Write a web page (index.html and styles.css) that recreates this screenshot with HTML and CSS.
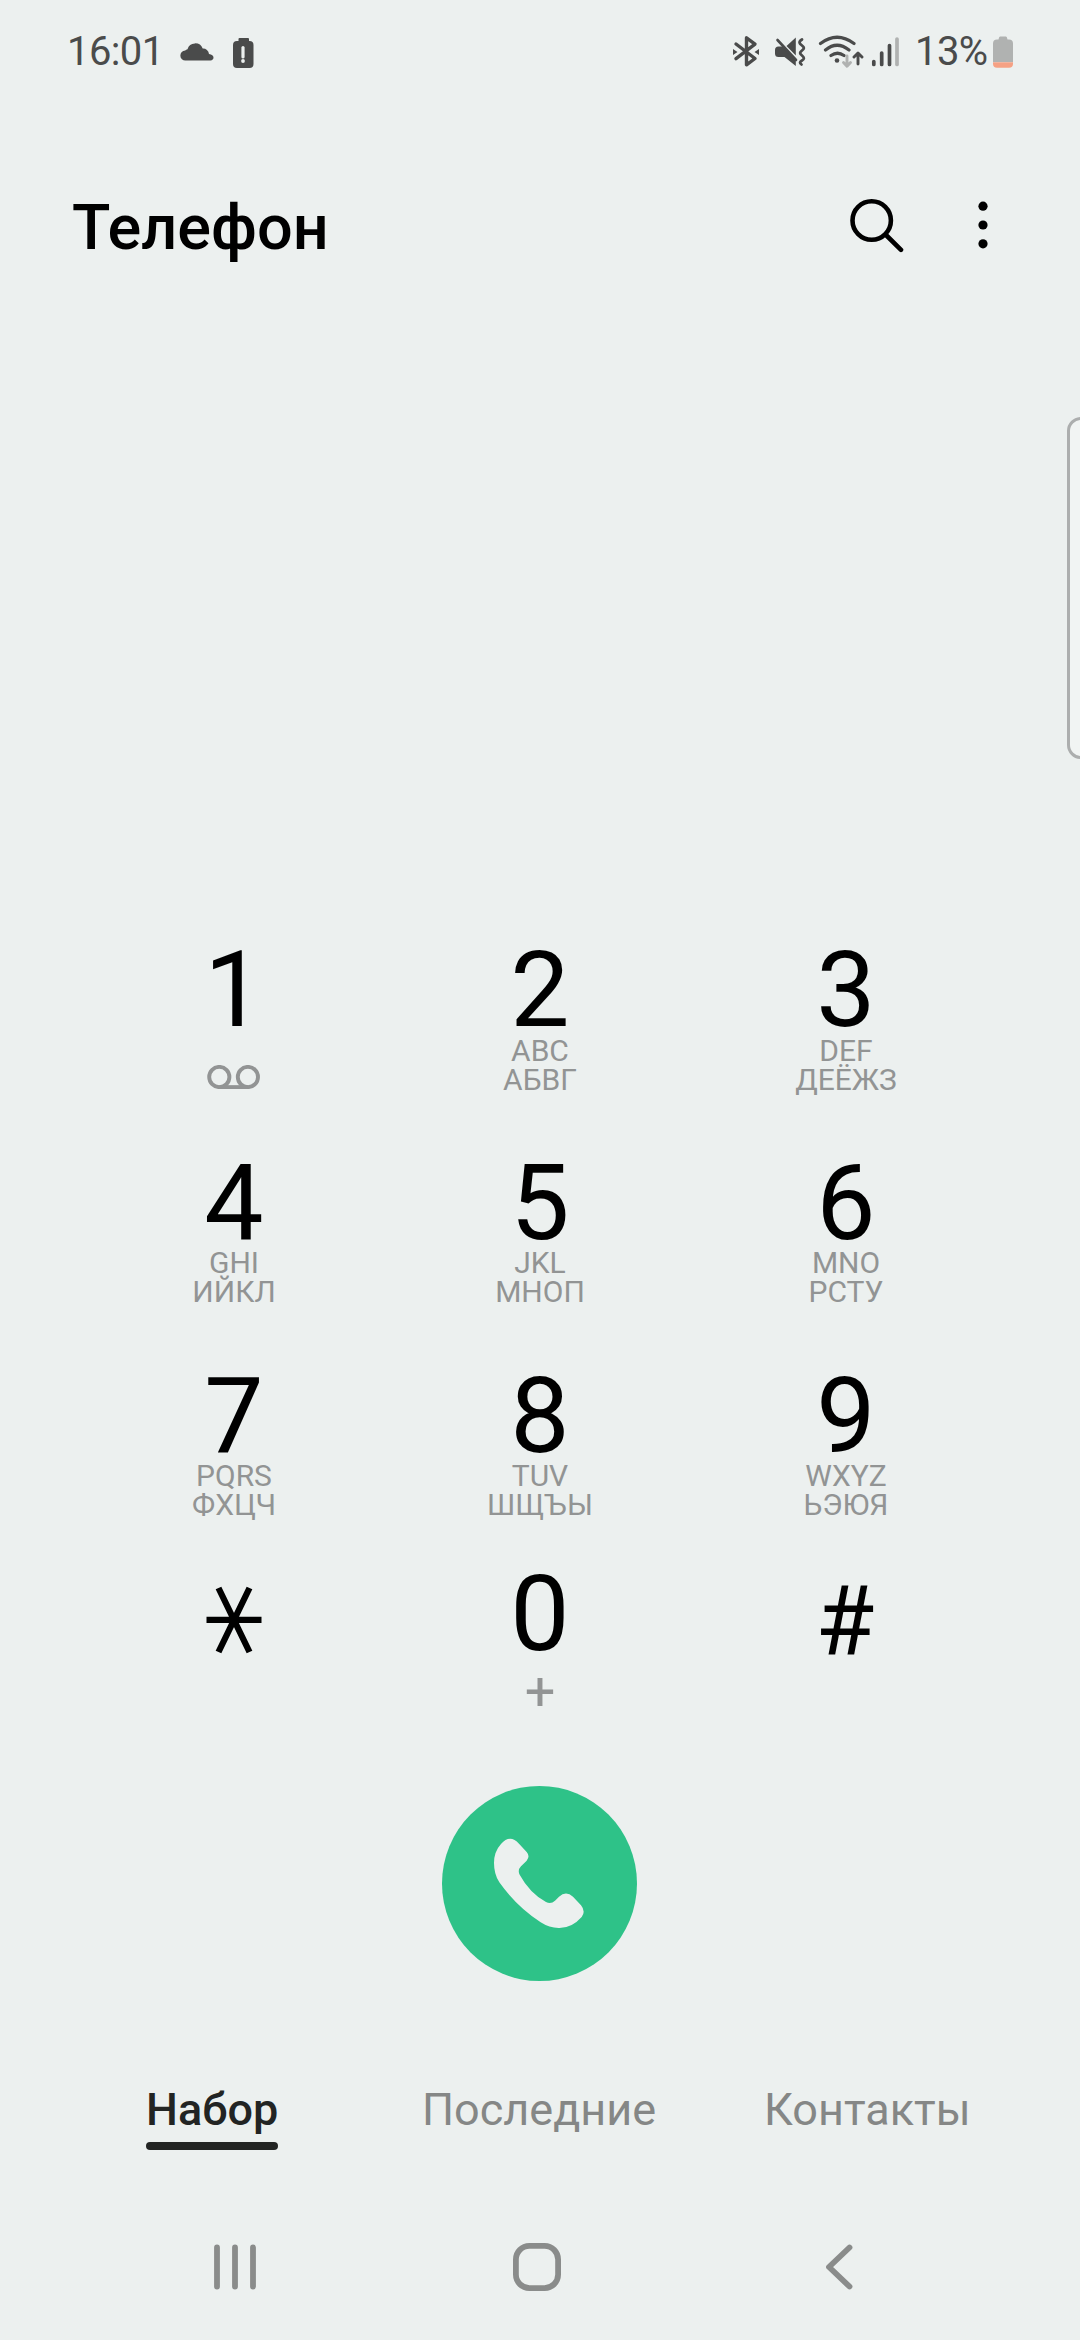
FILE: index.html
```html
<!DOCTYPE html>
<html lang="ru">
<head>
<meta charset="utf-8">
<title>Телефон</title>
<link rel="stylesheet" href="styles.css">
</head>
<body>
<div class="phone">
  <div class="status">
    <span class="clock">16:01</span>
    <svg class="cloud" width="34" height="20" viewBox="180 41 34 20"><path d="M185.500 60.500a5 5 0 0 1-.3-10 3.500 3.500 0 0 1 2.300-1.300 8 8 0 0 1 15.200-.6 6 6 0 0 1 6.300 5.400c2.800.4 4.500 1.700 4.500 3.600 0 1.600-1.200 2.900-3 2.900z"/></svg>
    <svg class="alert" width="22" height="32" viewBox="232 37 22 32"><path d="M239.500 38h8.500a1 1 0 0 1 1 1v2h.5a4 4 0 0 1 4 4v19a4 4 0 0 1-4 4h-12.500a4 4 0 0 1-4-4v-19a4 4 0 0 1 4-4h1.500v-2a1 1 0 0 1 1-1z"/><path class="cut-line" d="M243 47.500v9.500"/><circle class="cut-dot" cx="243" cy="61" r="1.900"/></svg>
    <svg class="bluetooth" width="28" height="34" viewBox="732 34 28 34"><path class="line" d="M736 44l19 14.500-8.500 6.300v-27l8.500 6.300-19 14.500"/><path class="tip" d="M733 49l4.500 3-4.500 3zM759 49l-4.500 3 4.500 3z"/></svg>
    <svg class="mute" width="32" height="32" viewBox="774 36 32 32"><path d="M775 50q0-3.500 3.500-3.500h4l13.300 13v6.500l-11.300-9h-6q-3.500 0-3.500-3.500zM786.500 46l9.300-8.500v18z"/><path class="line thin" d="M777.500 40l18.500 20"/><path class="line wave" d="M802 39.500c-4 2.500-2.500 4 0 6s2.500 3 0 5-2.500 3 0 5 2.500 3.500 0 5-2.500 2.500-.5 4"/></svg>
    <svg class="wifi" width="46" height="36" viewBox="818 33 46 36"><path class="line arc" d="M820.500 43.500q16.500-12.500 33.500 0M825.500 50q11.500-9.500 23.500 0M831 55.500q6.500-4.500 13 0"/><circle cx="837" cy="60.500" r="2.300"/><path class="line arrow pale" d="M847 56v10M843.500 62.500l3.500 3.700 3.500-3.700"/><path class="line arrow" d="M858 64v-10.500M854 57l4-4 4 4"/></svg>
    <svg class="signal" width="28" height="32" viewBox="871 36 28 32"><path class="line bar" d="M873.800 61.500v3M881.700 53v11.500M889.500 45.500v19"/><path class="line bar pale" d="M897 39v25.500"/></svg>
    <span class="percent">13%</span>
    <svg class="battery" width="20" height="32" viewBox="993 36 20 32"><path class="pale-fill" d="M1000 36.500h6q1 0 1.500 3h1.500q4 0 4 4v18.500h-20v-18.500q0-4 4-4h1.500q.5-3 1.500-3z"/><path class="low" d="M993 62.200h20v1.800q0 3.700-4 3.700h-12q-4 0-4-3.700z"/></svg>
  </div>

  <div class="header">
    <h1 class="title">Телефон</h1>
    <svg class="search" width="56" height="56" viewBox="848 197 56 56"><circle cx="871.700" cy="220.500" r="19.200"/><path d="M886 235l15 14.800"/></svg>
    <svg class="more" width="10" height="50" viewBox="977.700 200 10 50"><circle cx="982.700" cy="206.200" r="4.600"/><circle cx="982.700" cy="225" r="4.600"/><circle cx="982.700" cy="243.800" r="4.600"/></svg>
  </div>

  <div class="edge-handle"></div>

  <div class="keypad">
    <div class="key"><span class="digit">1</span><svg class="voicemail" width="54" height="24" viewBox="0 0 54 24"><circle cx="12.300" cy="12" r="10.100"/><circle cx="40.900" cy="12" r="10.100"/><path d="M12.300 22.100h28.600"/></svg></div>
    <div class="key"><span class="digit">2</span><span class="letters">ABC</span><span class="letters">АБВГ</span></div>
    <div class="key"><span class="digit">3</span><span class="letters">DEF</span><span class="letters">ДЕЁЖЗ</span></div>
    <div class="key"><span class="digit">4</span><span class="letters">GHI</span><span class="letters">ИЙКЛ</span></div>
    <div class="key"><span class="digit">5</span><span class="letters">JKL</span><span class="letters">МНОП</span></div>
    <div class="key"><span class="digit">6</span><span class="letters">MNO</span><span class="letters">РСТУ</span></div>
    <div class="key"><span class="digit">7</span><span class="letters">PQRS</span><span class="letters">ФХЦЧ</span></div>
    <div class="key"><span class="digit">8</span><span class="letters">TUV</span><span class="letters">ШЩЪЫ</span></div>
    <div class="key"><span class="digit">9</span><span class="letters">WXYZ</span><span class="letters">ЬЭЮЯ</span></div>
    <div class="key"><svg class="star" width="56" height="68" viewBox="0 0 56 68"><path d="M.500 33.800h55M12.500 2l31 64M43.500 2l-31 64"/></svg></div>
    <div class="key"><span class="digit">0</span><span class="plus">+</span></div>
    <div class="key"><span class="hash">#</span></div>
  </div>

  <div class="call">
    <svg width="195" height="195" viewBox="36 47 585 585"><path d="M213 221Q240 190 267 220L290 245Q301 258 290 271L273 288Q262 299 269 313Q299 368 348 395Q363 402 375 391L387 379Q408 360 429 379L453 405Q468 423 455 440Q425 474 386 473Q358 473 332 456Q259 408 208 336Q192 312 192 278Q192 244 213 221Z"/></svg>
  </div>

  <div class="tabs">
    <span class="tab active">Набор</span>
    <span class="tab recent">Последние</span>
    <span class="tab contacts">Контакты</span>
  </div>

  <div class="nav">
    <svg width="42" height="50" viewBox="0 0 42 50"><path d="M3 5.500v39M21 5.500v39M39 5.500v39"/></svg>
    <svg width="48" height="50" viewBox="0 0 48 50"><rect x="2.900" y="3.900" width="42.200" height="42.200" rx="13.500"/></svg>
    <svg class="back" width="28" height="50" viewBox="0 0 28 50"><path d="M24.500 5.500L4 25l20.500 19.500"/></svg>
  </div>
</div>
</body>
</html>
```
FILE: styles.css
```css
body {
  margin: 0;
  background: #ecf0ef;
  font-family: Roboto, "Noto Sans", sans-serif;
}
.phone {
  position: relative;
  width: 1080px;
  height: 2340px;
  overflow: hidden;
  display: flex;
  flex-direction: column;
}
svg { display: block; flex: none; }

.status {
  display: flex;
  align-items: flex-start;
  width: 946px;
  height: 147px;
  padding: 33px 67px 0;
  color: #4a4b4b;
  fill: #4a4b4b;
}
.status .line {
  fill: none;
  stroke: #4a4b4b;
  stroke-width: 3.4;
  stroke-linecap: round;
  stroke-linejoin: round;
}
.status .thin { stroke-width: 2.6; }
.status .wave { stroke-width: 2.8; }
.status .arc { stroke-width: 3.2; }
.status .arrow { stroke-width: 2.9; }
.status .bar { stroke-width: 3.7; }
.status .pale { stroke: #b0b2b1; }
.pale-fill { fill: #b0b2b1; }
.low { fill: #f5a184; }
.cut-line { stroke: #ecf0ef; stroke-width: 3.2; stroke-linecap: round; }
.cut-dot { fill: #ecf0ef; }
.clock, .percent {
  margin-top: 1px;
  font-size: 40px;
  line-height: 36px;
  letter-spacing: -0.6px;
}
.clock { width: 113px; }
.cloud { margin-top: 8px; }
.alert { margin: 4px 0 0 18px; }
.bluetooth { margin: 1px 0 0 478px; }
.mute { margin: 3px 0 0 14px; }
.wifi { margin-left: 12px; }
.signal { margin: 3px 0 0 7px; }
.percent { width: 77px; margin-left: 16px; }
.battery { margin: 3px 0 0 1px; }

.header {
  display: flex;
  align-items: center;
  height: 90px;
  padding: 0 92px 0 72px;
}
.title {
  flex: 1;
  margin: 5px 0 0;
  font-size: 63px;
  font-weight: 500;
  line-height: 90px;
}
.search {
  margin-right: 73.7px;
  fill: none;
  stroke: #000;
  stroke-width: 4.6;
  stroke-linecap: round;
}

/* Edge panel handle floats over the screen's right side */
.edge-handle {
  position: absolute;
  left: 1067px;
  top: 417px;
  width: 30px;
  height: 336px;
  border: 3px solid #acaeae;
  border-radius: 14px;
  background: #f1f4f3;
}

.keypad {
  display: grid;
  grid-template-columns: repeat(3, 306px);
  grid-template-rows: 213px 213px 198px 218px;
  margin: 674px 0 0 81px;
}
.key {
  display: flex;
  flex-direction: column;
  align-items: center;
}
.digit {
  font-size: 105.5px;
  line-height: 92px;
}
.letters {
  font-size: 30px;
  line-height: 29px;
  color: #929494;
}
.key:nth-child(n+4) .digit { margin-bottom: -1px; }
.voicemail {
  margin-top: 29px;
  fill: none;
  stroke: #929494;
  stroke-width: 3.9;
}
.star {
  margin-top: 18px;
  stroke: #000;
  stroke-width: 6.3;
}
.plus {
  font-size: 54px;
  line-height: 58px;
  margin-top: 4px;
  color: #929494;
}
.hash {
  font-size: 95.5px;
  line-height: 106px;
  margin-right: 2px;
}

.call {
  width: 195px;
  height: 195px;
  margin-left: 442px;
  border-radius: 50%;
  background: #2ec288;
  fill: #ecf0ef;
}

.tabs {
  display: flex;
  height: 56px;
  margin: 95px 0 0 146px;
  padding-top: 10px;
  font-size: 45px;
  line-height: 48px;
  color: #858786;
  white-space: nowrap;
}
.active {
  width: 132px;
  text-align: center;
  font-weight: 500;
  color: #222423;
}
.active::after {
  content: "";
  display: block;
  height: 8px;
  margin-top: 8px;
  border-radius: 4px;
  background: #222423;
}
.recent { margin-left: 144px; width: 240px; }
.contacts { margin-left: 102px; }

.nav {
  display: flex;
  gap: 257px;
  margin: 100px 0 0 214px;
  fill: none;
  stroke: #8a8c8b;
  stroke-width: 5.8;
  stroke-linecap: round;
  stroke-linejoin: round;
}
.back { margin-left: 7px; }
```
